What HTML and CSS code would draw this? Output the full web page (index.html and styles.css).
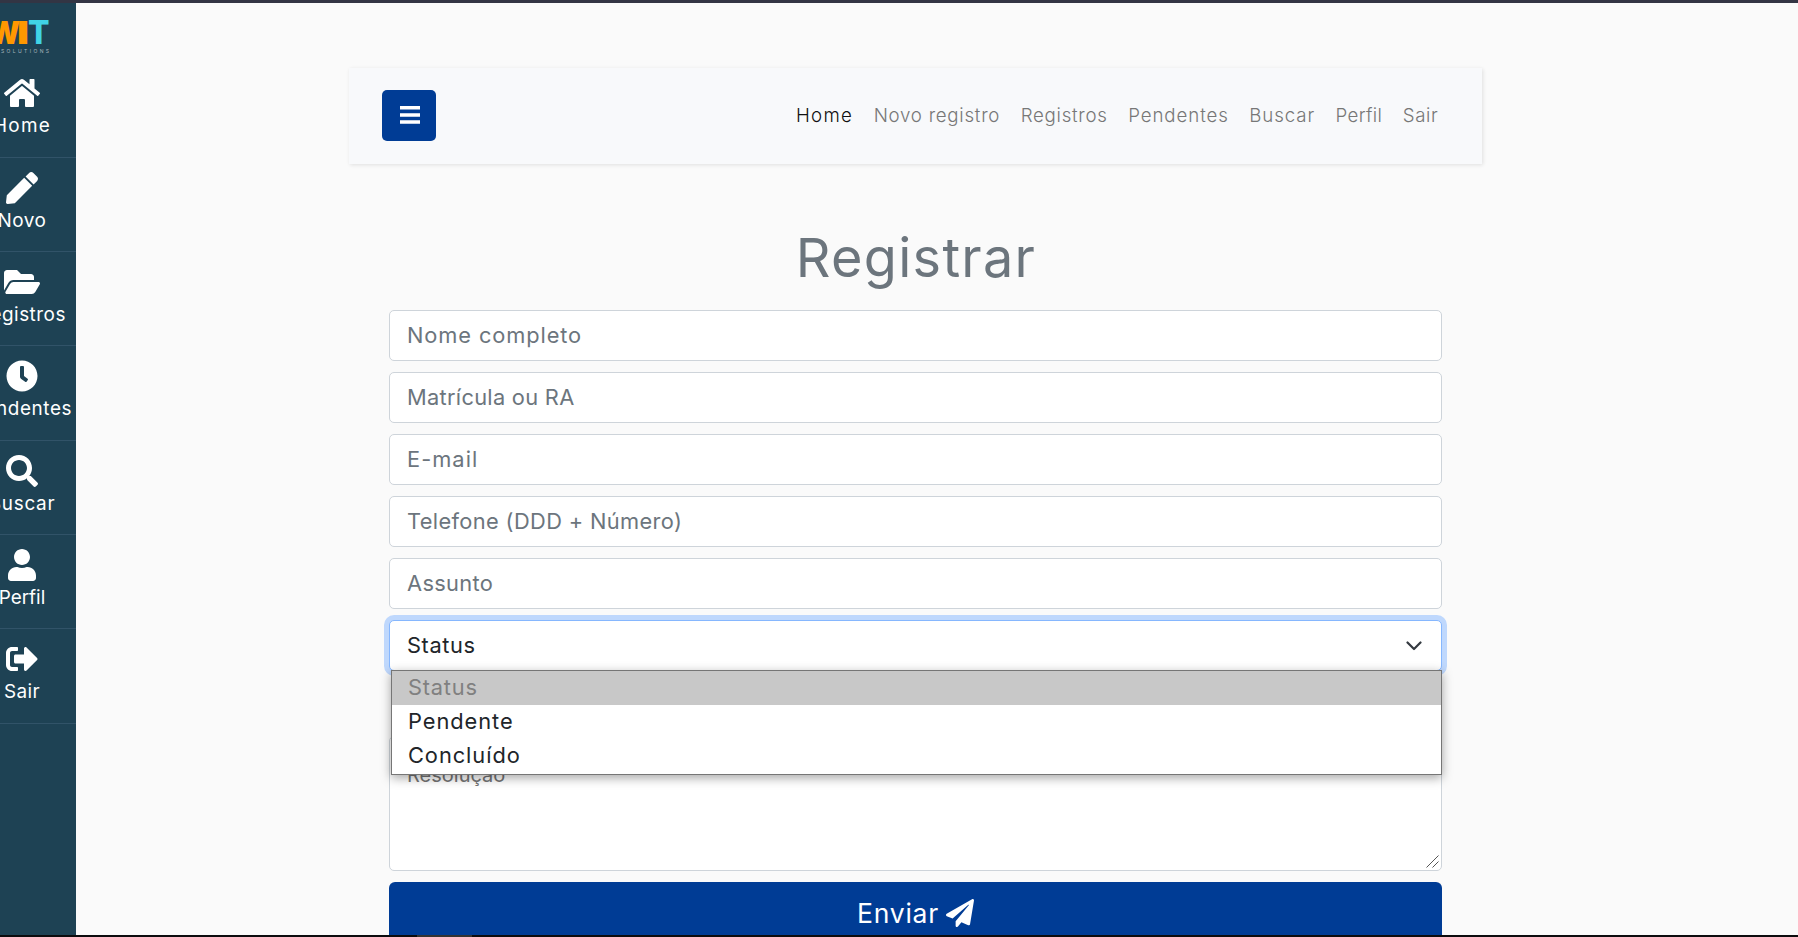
FILE: index.html
```
<!DOCTYPE html>
<html lang="pt-BR">
<head>
<meta charset="utf-8">
<title>Registrar</title>
<link rel="stylesheet" href="styles.css">
</head>
<body>
<div class="window-top"></div>
<div class="app">
  <aside class="sidebar">
    <div class="sidebar-inner">
      <div class="logo"><svg width="56" height="36" viewBox="0 0 56 36"><text class="logo-w" x="-11" y="27" textLength="31" lengthAdjust="spacingAndGlyphs">W</text><text class="logo-w" x="17" y="27" textLength="12" lengthAdjust="spacingAndGlyphs">I</text><text class="logo-t" x="28" y="27" textLength="21.500" lengthAdjust="spacingAndGlyphs">T</text><text class="logo-s" x="1" y="35.500" textLength="48">SOLUTIONS</text></svg></div>
      <a class="side"><svg width="36" height="32" viewBox="0 0 576 512"><path d="M280.37 148.26L96 300.11V464a16 16 0 0 0 16 16l112.06-.29a16 16 0 0 0 15.92-16V368a16 16 0 0 1 16-16h64a16 16 0 0 1 16 16v95.64a16 16 0 0 0 16 16.05L464 480a16 16 0 0 0 16-16V300L295.67 148.26a12.19 12.19 0 0 0-15.3 0zM571.6 251.47L488 182.56V44.05a12 12 0 0 0-12-12h-56a12 12 0 0 0-12 12v72.61L318.47 43a48 48 0 0 0-61 0L4.34 251.47a12 12 0 0 0-1.6 16.9l25.5 31A12 12 0 0 0 45.15 301l235.22-193.74a12.19 12.19 0 0 1 15.3 0L530.9 301a12 12 0 0 0 16.9-1.6l25.5-31a12 12 0 0 0-1.7-16.93z"/></svg><span class="s1">Home</span></a>
      <a class="side"><svg width="32" height="32" viewBox="0 0 512 512"><path d="M290.74 93.24l128.02 128.02-277.99 277.99-114.14 12.6C11.35 513.54-1.56 500.62.14 485.34l12.7-114.22 277.9-277.88zm207.2-19.06l-60.11-60.11c-18.75-18.75-49.16-18.75-67.91 0l-56.55 56.55 128.02 128.02 56.55-56.55c18.75-18.76 18.75-49.16 0-67.91z"/></svg><span class="s2">Novo</span></a>
      <a class="side"><svg width="36" height="32" viewBox="0 0 576 512"><path d="M572.694 292.093L500.27 416.248A63.997 63.997 0 0 1 444.989 448H45.025c-18.523 0-30.064-20.093-20.731-36.093l72.424-124.155A64 64 0 0 1 152 256h399.964c18.523 0 30.064 20.093 20.73 36.093zM152 224h328v-48c0-26.51-21.49-48-48-48H272l-64-64H48C21.49 64 0 85.49 0 112v278.046l69.077-118.418C86.214 242.25 117.989 224 152 224z"/></svg><span class="s3">Registros</span></a>
      <a class="side"><svg width="32" height="32" viewBox="0 0 512 512"><path d="M256,8C119,8,8,119,8,256S119,504,256,504,504,393,504,256,393,8,256,8Zm92.49,313h0l-20,25a16,16,0,0,1-22.49,2.5h0l-67-49.72a40,40,0,0,1-15-31.23V112a16,16,0,0,1,16-16h32a16,16,0,0,1,16,16V256l58,42.5A16,16,0,0,1,348.49,321Z"/></svg><span class="s4">Pendentes</span></a>
      <a class="side"><svg width="32" height="32" viewBox="0 0 512 512"><path d="M505 442.700L405.300 343c-4.500-4.500-10.600-7-17-7H372c27.600-35.300 44-79.700 44-128C416 93.100 322.900 0 208 0S0 93.100 0 208s93.100 208 208 208c48.300 0 92.700-16.400 128-44v16.300c0 6.400 2.500 12.500 7 17l99.700 99.700c9.400 9.400 24.600 9.400 33.900 0l28.300-28.300c9.400-9.400 9.400-24.600.1-34zM208 336c-70.700 0-128-57.200-128-128 0-70.700 57.200-128 128-128 70.700 0 128 57.200 128 128 0 70.700-57.200 128-128 128z"/></svg><span class="s5">Buscar</span></a>
      <a class="side"><svg width="28" height="32" viewBox="0 0 448 512"><path d="M224 256c70.700 0 128-57.300 128-128S294.700 0 224 0 96 57.300 96 128s57.300 128 128 128zm89.600 32h-16.700c-22.200 10.200-46.900 16-72.900 16s-50.600-5.800-72.900-16h-16.700C60.200 288 0 348.200 0 422.400V464c0 26.500 21.500 48 48 48h352c26.500 0 48-21.500 48-48v-41.600c0-74.200-60.200-134.400-134.400-134.400z"/></svg><span class="s6">Perfil</span></a>
      <a class="side"><svg width="32" height="32" viewBox="0 0 512 512"><path d="M497 273L329 441c-15 15-41 4.500-41-17v-96H152c-13.300 0-24-10.700-24-24v-96c0-13.300 10.700-24 24-24h136V88c0-21.400 25.900-32 41-17l168 168c9.300 9.400 9.300 24.600 0 34zM192 436v-40c0-6.600-5.400-12-12-12H96c-17.700 0-32-14.300-32-32V160c0-17.700 14.300-32 32-32h84c6.600 0 12-5.400 12-12V76c0-6.600-5.400-12-12-12H96c-53 0-96 43-96 96v192c0 53 43 96 96 96h84c6.600 0 12-5.400 12-12z"/></svg><span class="s7">Sair</span></a>
    </div>
  </aside>
  <main class="content">
    <nav class="navbar">
      <button class="toggler"><svg width="20" height="18" viewBox="0 0 20 18"><path d="M0 0h20v3.500H0zM0 7.200h20v3.500H0zM0 14.300h20v3.500H0z"/></svg></button>
      <div class="links">
        <a class="n1">Home</a><a class="n2">Novo registro</a><a class="n3">Registros</a><a class="n4">Pendentes</a><a class="n5">Buscar</a><a class="n6">Perfil</a><a class="n7">Sair</a>
      </div>
    </nav>
    <form class="form">
      <h1>Registrar</h1>
      <div class="field"><span class="f1">Nome completo</span></div>
      <div class="field"><span class="f2">Matrícula ou RA</span></div>
      <div class="field"><span class="f3">E-mail</span></div>
      <div class="field"><span class="f4">Telefone (DDD + Número)</span></div>
      <div class="field"><span class="f5">Assunto</span></div>
      <div class="field select"><span class="f6">Status</span><svg width="16" height="10" viewBox="0 0 16 10"><path d="M1.500 1.500L8 8l6.500-6.500"/></svg>
        <div class="menu">
          <div class="option disabled"><span class="o1">Status</span></div>
          <div class="option"><span class="o2">Pendente</span></div>
          <div class="option"><span class="o3">Concluído</span></div>
        </div>
      </div>
      <div class="field area"><span class="f7">Resolução</span><svg width="13" height="13" viewBox="0 0 13 13"><path d="M0.500 12.500l12-12M6.500 12.500l6-6"/></svg></div>
      <button class="send" type="button"><span>Enviar</span><svg width="28" height="28" viewBox="0 0 512 512"><path d="M476 3.200L12.500 270.600c-18.100 10.400-15.800 35.600 2.200 43.200L121 358.400l287.300-253.200c5.500-4.900 13.300 2.600 8.600 8.300L176 407v80.500c0 23.600 28.500 32.900 42.500 15.800L282 426l124.600 52.200c14.200 6 30.400-2.900 33-18.200l72-432C515 7.800 493.300-6.800 476 3.200z"/></svg></button>
    </form>
  </main>
</div>
<div class="window-bottom"></div>
</body>
</html>
```
FILE: styles.css
```
* { box-sizing: border-box; }
body { margin: 0; width: 1798px; height: 937px; overflow: hidden; display: flex; flex-direction: column; background: #fafafa; font-family: Inter, "Liberation Sans", sans-serif; }
.window-top { height: 3px; background: #333544; flex: none; }
.window-bottom { height: 2px; flex: none; background: linear-gradient(90deg, #0c0c0e 417px, #333 417px, #333 472px, #0c0c0e 472px); }
.app { display: flex; height: 932px; overflow: hidden; }

.sidebar { width: 76px; flex: none; background: #1e4254; overflow: hidden; }
.sidebar-inner { width: 108px; margin-left: -32px; }
.logo { height: 60.200px; padding: 14px 0 0 32px; }
.logo svg { display: block; overflow: visible; }
.logo-w, .logo-t { font-size: 32px; font-weight: 900; fill: #ff9800; }
.logo-t { font-weight: 800; fill: #40d4e6; }
.logo-s { font-size: 5px; fill: #a9b7be; }
.side { display: flex; flex-direction: column; align-items: center; height: 94.370px; padding-top: 14px; border-bottom: 1px solid #315368; color: #fff; font-size: 18.900px; line-height: 28px; }
.side svg { display: block; fill: #fff; flex: none; }
.side span { margin-top: 3px; white-space: nowrap; }
.s1 { letter-spacing: 1.300px; }
.s2 { letter-spacing: .500px; }
.s3 { letter-spacing: .500px; }
.s4 { letter-spacing: .600px; }
.s5 { letter-spacing: .700px; }
.s6 { letter-spacing: 0; }
.s7 { letter-spacing: .400px; }

.content { flex: 1; }
.navbar { width: 1133px; height: 96px; margin: 65px 0 0 273px; padding: 0 43.500px 2px 33px; display: flex; align-items: center; justify-content: space-between; background: #f8f9fb; box-shadow: 1px 1px 4px rgba(0,0,0,.11); }
.toggler { width: 54px; height: 51px; padding: 0; border: 0; border-radius: 5px; background: #003c95; }
.toggler svg { fill: #fff; display: block; margin: -1px auto 0 18px; }
.links { display: flex; gap: 20.500px; font-size: 18.700px; font-weight: 300; color: #777; }
.n1 { color: #111; letter-spacing: 1.300px; }
.n2 { letter-spacing: .740px; }
.n3 { letter-spacing: .740px; }
.n4 { letter-spacing: .900px; }
.n5 { letter-spacing: .900px; }
.n6 { letter-spacing: .340px; }
.n7 { letter-spacing: .650px; }

.form { width: 1053px; margin: 55px 0 0 313px; display: flex; flex-direction: column; gap: 11px; }
h1 { margin: 0; height: 80px; text-align: center; font-size: 54px; line-height: 77px; font-weight: 400; letter-spacing: 1.300px; text-indent: 1px; color: #6c757d; }
.field { position: relative; height: 51px; flex: none; border: 1px solid #ced4da; border-radius: 5px; background: #fff; padding: 0 17px 2px; display: flex; align-items: center; font-size: 21.800px; color: #6c757d; }
.f1 { letter-spacing: .900px; }
.f2 { letter-spacing: .300px; }
.f3 { letter-spacing: 1.050px; }
.f4 { letter-spacing: .370px; }
.f5 { letter-spacing: .350px; }
.f6 { letter-spacing: .600px; }
.select { border-color: #86b7fe; box-shadow: 0 0 0 5px #bfd8fd; color: #212529; justify-content: space-between; padding-right: 19px; }
.select svg { margin-top: 2px; fill: none; stroke: #343a40; stroke-width: 2.200; stroke-linecap: round; stroke-linejoin: round; }
.menu { position: absolute; z-index: 2; left: 1px; top: 49px; width: 1051px; height: 105px; border: 1px solid #767676; background: #fff; box-shadow: 0 3px 10px rgba(0,0,0,.35); }
.option { height: 34.200px; padding: 0 0 2px 16px; display: flex; align-items: center; color: #212529; }
.disabled { background: #c8c8c8; color: #808080; }
.o1 { letter-spacing: .800px; }
.o2, .o3 { letter-spacing: .950px; }
.area { height: 135px; margin-top: 54px; align-items: flex-start; padding: 26px 17px; }
.f7 { font-size: 20px; color: #757575; }
.area svg { position: absolute; right: 2px; bottom: 2px; stroke: #555; fill: none; }
.send { height: 64px; padding: 0 0 2px; border: 0; border-radius: 6px; background: #003c95; color: #fff; display: flex; justify-content: center; align-items: center; gap: 7px; font: 26.500px Inter, sans-serif; letter-spacing: .800px; }
.send svg { fill: #fff; }
```
